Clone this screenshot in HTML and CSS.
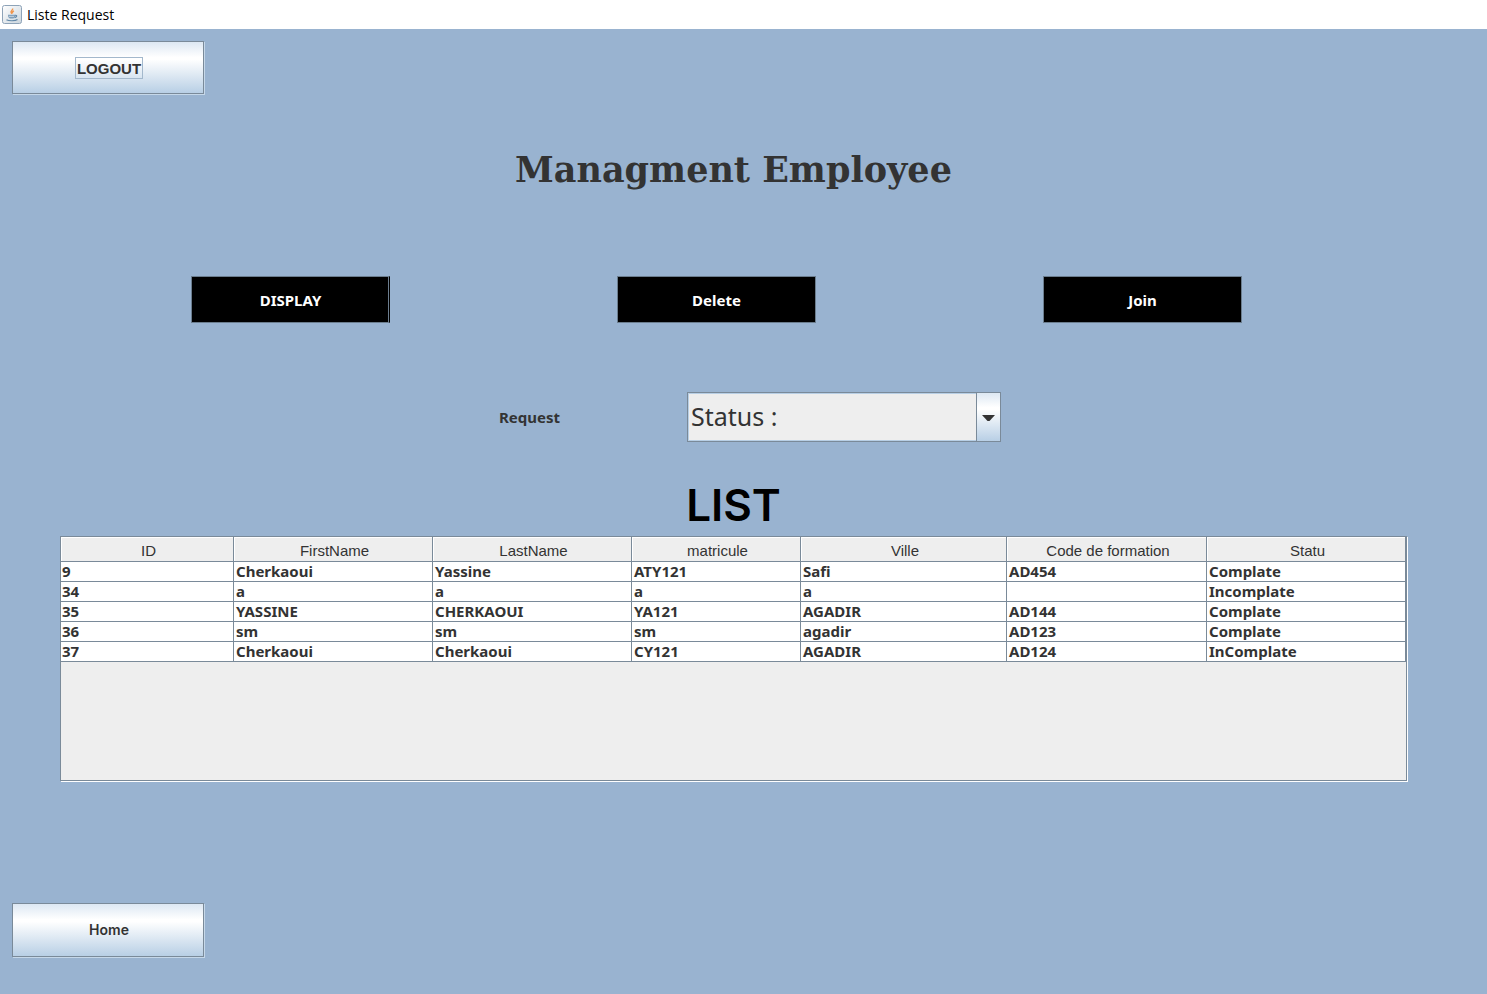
FILE: index.html
```html
<!DOCTYPE html>
<html lang="en">
<head>
<meta charset="utf-8">
<title>Liste Request</title>
<link rel="stylesheet" href="styles.css">
</head>
<body>
<header class="titlebar">
  <svg class="app-icon" viewBox="0 0 20 20" aria-hidden="true">
    <defs><linearGradient id="tile" x1="0" y1="0" x2="1" y2="1"><stop offset="0" stop-color="#fff"/><stop offset="1" stop-color="#cbd5dd"/></linearGradient></defs>
    <rect x="0.5" y="0.5" width="19" height="18" rx="2" fill="url(#tile)" stroke="#8ea3b8"/>
    <path d="M10.600 3.500c.8 1.600-2.800 2.600-1.400 4.300l.7.900M12 5.800c-1.600.7-2 1.300-1.200 2.500" fill="none" stroke="#f0954c" stroke-width="1.400"/>
    <path d="M6 9.800h7.200c0 2.600-1 3.700-2.200 3.700H8.200C7 13.500 6 12.400 6 9.800z" fill="#7f9fba"/>
    <path d="M7 11.400h5" stroke="#dfe8ef" stroke-width="0.700"/>
    <path d="M13 10.300c2.600-.4 2 1.800-.4 2.300M4.500 14.700c2 1.400 9 1.400 11-.1" fill="none" stroke="#6288a8" stroke-width="1.200"/>
  </svg>
  <span>Liste Request</span>
</header>
<main class="frame">
  <button class="metal-button logout" type="button"><span class="focus-ring">LOGOUT</span></button>
  <div class="content">
    <h1 class="page-title">Managment Employee</h1>
    <div class="actions">
      <button class="action focused" type="button">DISPLAY</button>
      <button class="action" type="button">Delete</button>
      <button class="action" type="button">Join</button>
    </div>
    <div class="request">
      <label for="status">Request</label>
      <div class="combo">
        <select id="status"><option>Status :</option></select>
        <span class="combo-arrow"><svg viewBox="0 0 13 7" aria-hidden="true"><path d="M0 1h13L7.500 7h-2z" fill="#333"/></svg></span>
      </div>
    </div>
    <h2 class="list-title">LIST</h2>
    <div class="scroll-pane">
      <table class="requests">
        <colgroup><col class="c-id"><col class="c-name"><col class="c-name"><col class="c-mat"><col class="c-city"><col class="c-code"><col class="c-statu"></colgroup>
        <thead>
          <tr><th>ID</th><th>FirstName</th><th>LastName</th><th>matricule</th><th>Ville</th><th>Code de formation</th><th>Statu</th></tr>
        </thead>
        <tbody>
          <tr><td>9</td><td>Cherkaoui</td><td>Yassine</td><td>ATY121</td><td>Safi</td><td>AD454</td><td>Complate</td></tr>
          <tr><td>34</td><td>a</td><td>a</td><td>a</td><td>a</td><td></td><td>Incomplate</td></tr>
          <tr><td>35</td><td>YASSINE</td><td>CHERKAOUI</td><td>YA121</td><td>AGADIR</td><td>AD144</td><td>Complate</td></tr>
          <tr><td>36</td><td>sm</td><td>sm</td><td>sm</td><td>agadir</td><td>AD123</td><td>Complate</td></tr>
          <tr><td>37</td><td>Cherkaoui</td><td>Cherkaoui</td><td>CY121</td><td>AGADIR</td><td>AD124</td><td>InComplate</td></tr>
        </tbody>
      </table>
    </div>
  </div>
  <button class="metal-button home" type="button">Home</button>
</main>
</body>
</html>
```
FILE: styles.css
```css
* { box-sizing: border-box; }

body {
  margin: 0;
  min-height: 100vh;
  display: flex;
  flex-direction: column;
  background: #99b3d0;
  color: #333;
  font: bold 15px/20px "Noto Sans", sans-serif;
}

.titlebar {
  display: flex;
  align-items: center;
  gap: 5px;
  height: 29px;
  padding: 0 2px;
  background: #fff;
  color: #000;
  font: 14px/20px "Open Sans", sans-serif;
}

.app-icon { width: 20px; height: 20px; }

.frame {
  flex: 1;
  display: flex;
  flex-direction: column;
  padding: 12px 12px 37px;
}

.metal-button {
  width: 192px;
  height: 53px;
  padding: 0 0 0 2px;
  border: 1px solid #7a8a99;
  border-radius: 0;
  box-shadow: 1px 1px 0 #c6d8e9;
  background: linear-gradient(#dde8f3 0%, #fff 30%, #fff 34%, #b8cfe5 100%);
  color: #333;
}

.logout { font: bold 15px/18px "Liberation Sans", sans-serif; }
.home { height: 54px; margin-top: auto; font: 600 14px/20px Inter, sans-serif; }

.focus-ring {
  display: inline-block;
  padding: 2px 1px 0;
  border: 1px solid #a3b8cc;
}

.content { padding: 0 68px 0 48px; }

.page-title {
  margin: 52px 0 0;
  text-align: center;
  font: bold 35px/48px "DejaVu Serif", serif;
}

.actions {
  display: flex;
  justify-content: space-between;
  margin-top: 82px;
  padding: 0 165px 0 131px;
}

.action {
  width: 199px;
  height: 47px;
  padding: 0;
  border: 1px solid #6b7d8e;
  background: #000;
  color: #fff;
  font: inherit;
}

.focused { box-shadow: inset -1px 0 0 #6b7d8e; border-right-color: #000; }

.request {
  display: flex;
  justify-content: center;
  align-items: center;
  gap: 127px;
  margin-top: 69px;
  padding-left: 33px;
}

.combo {
  display: grid;
  grid-template-columns: 1fr 25px;
  width: 314px;
  height: 50px;
}

.combo select {
  grid-area: 1 / 1 / 2 / 3;
  appearance: none;
  padding: 0 26px 2px 3px;
  border: 1px solid #7a8a99;
  border-radius: 0;
  background: #eee;
  box-shadow: inset 0 0 0 1px #b8cfe5;
  color: #333;
  font: 25px/32px "Noto Sans", sans-serif;
}

.combo-arrow {
  grid-area: 1 / 2 / 2 / 3;
  display: grid;
  place-items: center;
  border: 1px solid #7a8a99;
  background: linear-gradient(#dde8f3 0%, #fff 30%, #fff 34%, #b8cfe5 100%);
  pointer-events: none;
}

.combo-arrow svg { width: 13px; height: 7px; }

.list-title {
  margin: 39px 0 0;
  color: #000;
  text-align: center;
  font: 600 44px/48px Inter, sans-serif;
}

.scroll-pane {
  height: 245px;
  margin-top: 7px;
  border: 1px solid #7a8a99;
  box-shadow: 1px 1px 0 #fff;
  background: #eee;
}

.requests {
  width: 100%;
  table-layout: fixed;
  border-collapse: separate;
  border-spacing: 0;
}

.c-id { width: 173px; }
.c-name { width: 199px; }
.c-mat { width: 169px; }
.c-city { width: 206px; }
.c-code { width: 200px; }
.c-statu { width: 199px; }

.requests th {
  height: 25px;
  padding: 3px 0 0 3px;
  border-right: 1px solid #7a8a99;
  border-bottom: 1px solid #7a8a99;
  box-shadow: inset 1px 1px 0 #fff;
  font: 15px/20px "Liberation Sans", sans-serif;
}

.requests td {
  height: 20px;
  padding: 0 2px;
  border-right: 1px solid #7a8a99;
  border-bottom: 1px solid #7a8a99;
  background: #fff;
  line-height: 19px;
}

.requests td:first-child { padding-left: 1px; }
```
